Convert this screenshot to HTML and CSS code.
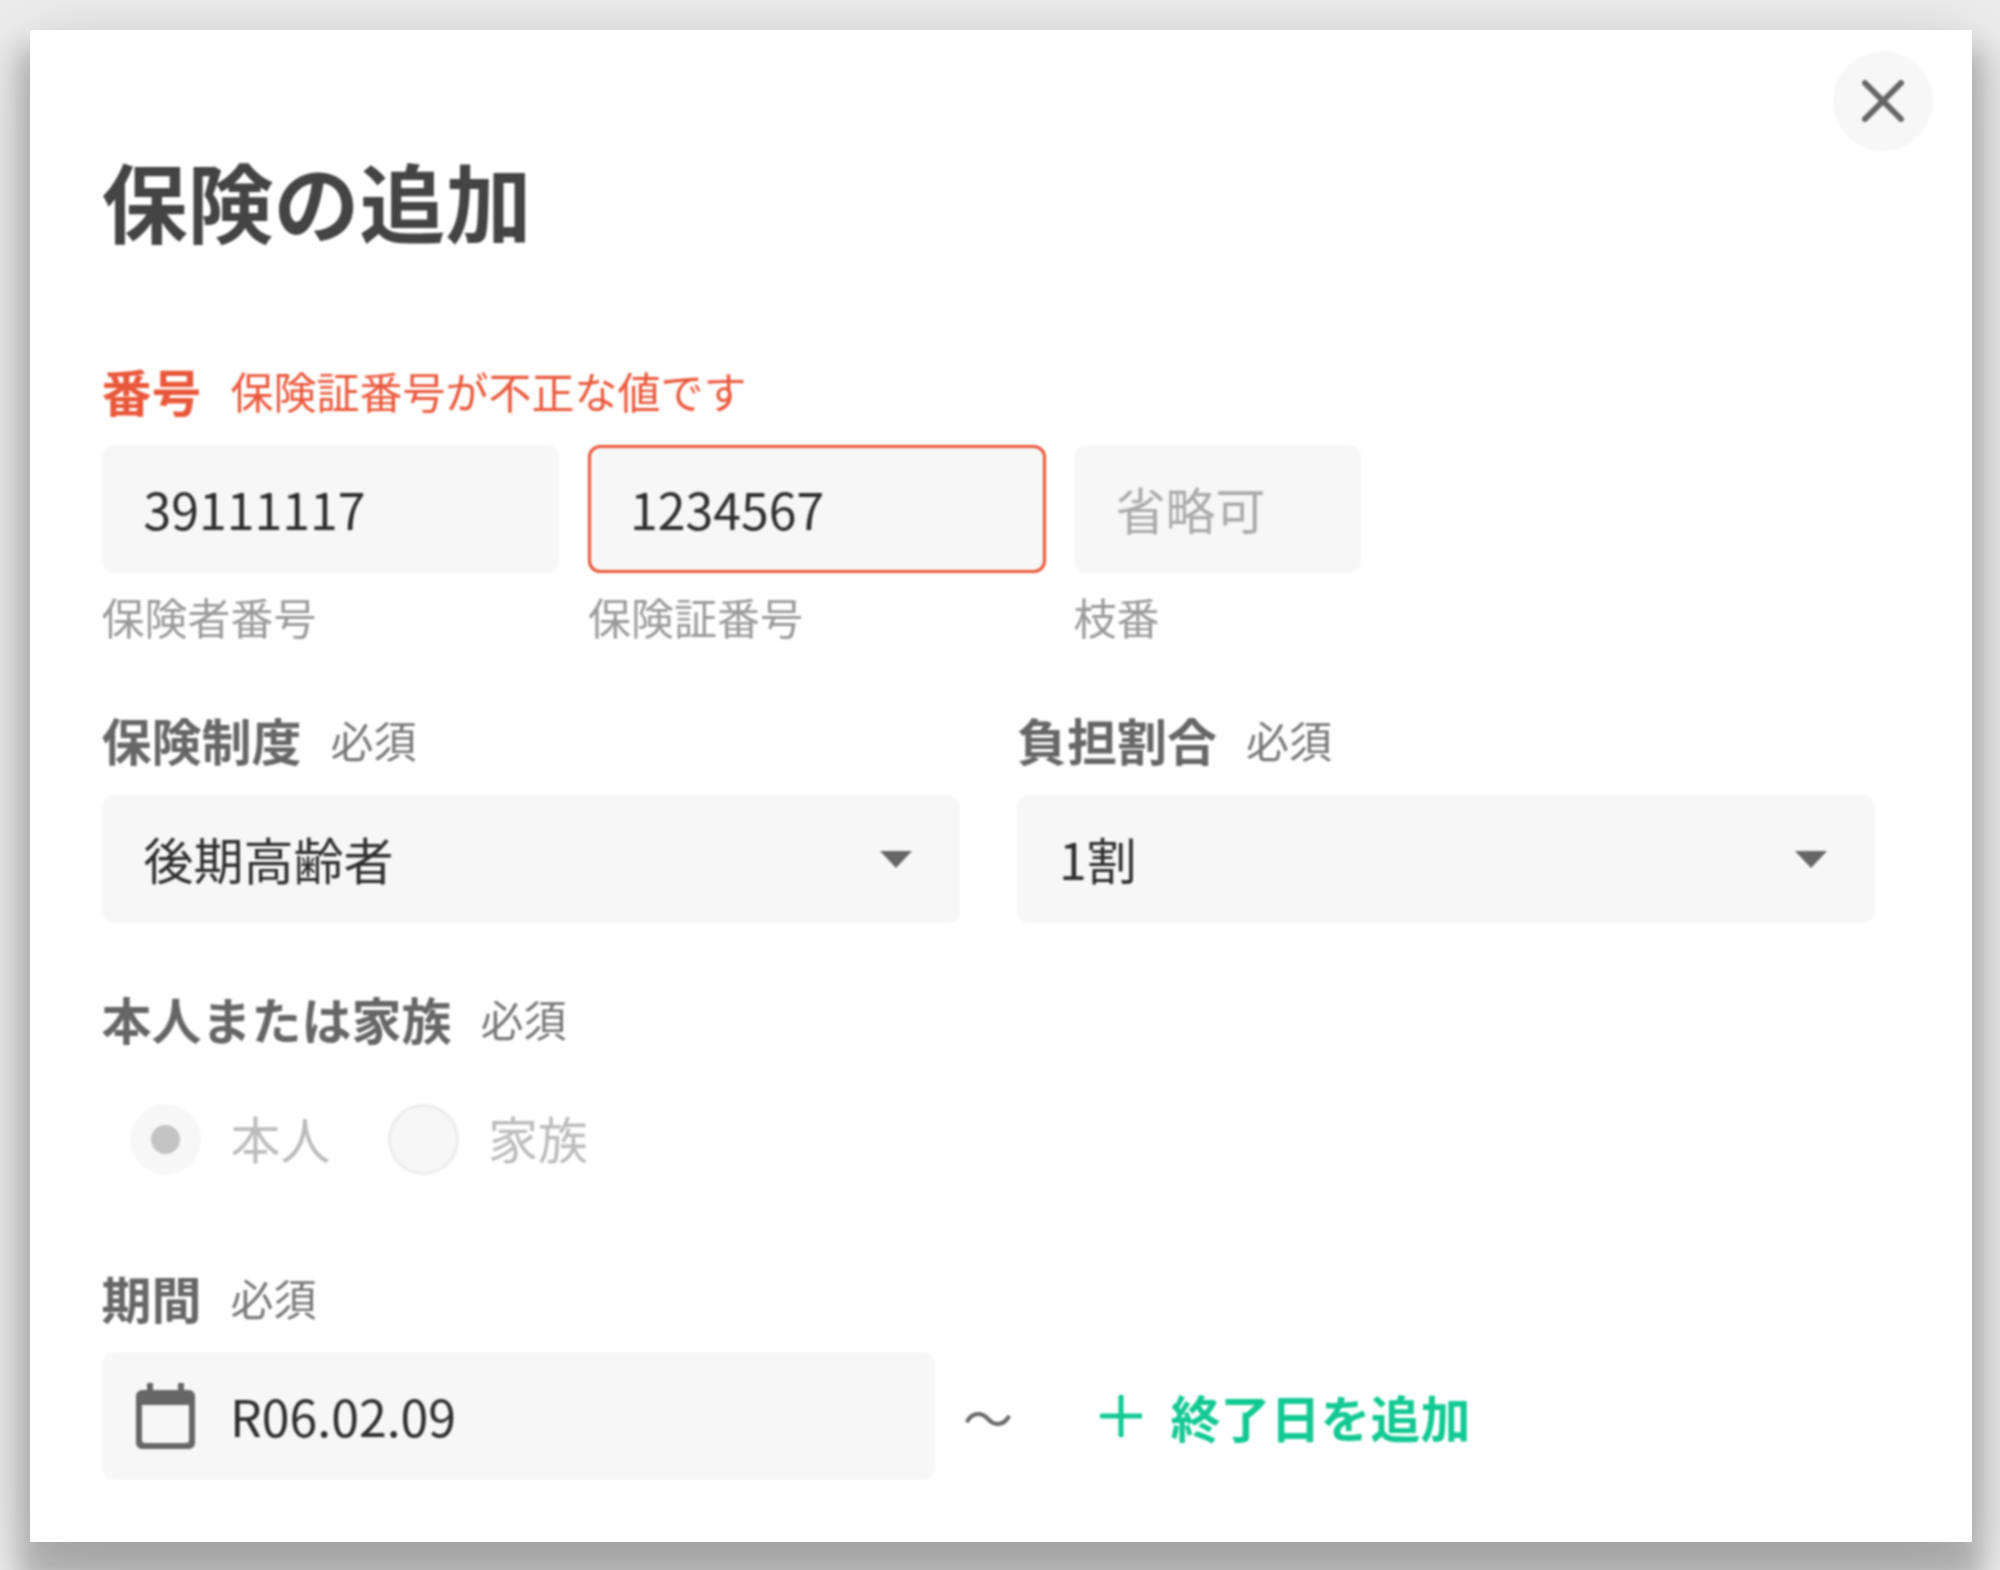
FILE: index.html
```html
<!DOCTYPE html>
<html lang="ja">
<head>
<meta charset="utf-8">
<title>保険の追加</title>
<link rel="stylesheet" href="styles.css">
</head>
<body>
<div class="modal">
  <button class="close" type="button" aria-label="閉じる">
    <svg width="42" height="42" viewBox="0 0 42 42"><path d="M3 3L39 39M39 3L3 39" stroke="#666" stroke-width="6" stroke-linecap="round" fill="none"/></svg>
  </button>
  <h1 class="title">保険の追加</h1>

  <div class="label-row label-row-first error">
    <span class="label">番号</span><span class="note">保険証番号が不正な値です</span>
  </div>
  <div class="number-row">
    <div class="number-col w-insurer">
      <div class="field">39111117</div>
      <div class="hint">保険者番号</div>
    </div>
    <div class="number-col w-card">
      <div class="field field-error">1234567</div>
      <div class="hint">保険証番号</div>
    </div>
    <div class="number-col w-branch">
      <div class="field placeholder">省略可</div>
      <div class="hint">枝番</div>
    </div>
  </div>

  <div class="select-row">
    <div class="select-col">
      <div class="label-row"><span class="label">保険制度</span><span class="note">必須</span></div>
      <div class="field select">後期高齢者<span class="arrow"></span></div>
    </div>
    <div class="select-col">
      <div class="label-row"><span class="label">負担割合</span><span class="note">必須</span></div>
      <div class="field select">1割<span class="arrow"></span></div>
    </div>
  </div>

  <div class="label-row label-row-person"><span class="label">本人または家族</span><span class="note">必須</span></div>
  <div class="radio-row">
    <span class="radio radio-on"><span class="dot"></span></span><span class="radio-text">本人</span>
    <span class="radio radio-off"></span><span class="radio-text">家族</span>
  </div>

  <div class="label-row label-row-period"><span class="label">期間</span><span class="note">必須</span></div>
  <div class="period-row">
    <div class="field date">
      <svg class="cal" width="59" height="66" viewBox="0 0 59 66"><path fill="#666" fill-rule="evenodd" d="M11 0h6v7h25V0h6v7h5a6 6 0 0 1 6 6v47a6 6 0 0 1-6 6H6a6 6 0 0 1-6-6V13a6 6 0 0 1 6-6h5zM6 22v35a3 3 0 0 0 3 3h41a3 3 0 0 0 3-3V22z"/></svg>
      <span>R06.02.09</span>
    </div>
    <span class="tilde">〜</span>
    <button class="add" type="button">
      <svg width="42" height="42" viewBox="0 0 42 42"><path d="M21 0V42M0 21H42" stroke="#12c991" stroke-width="5" fill="none"/></svg>
      <span>終了日を追加</span>
    </button>
  </div>
</div>
</body>
</html>
```
FILE: styles.css
```css
* { box-sizing: border-box; }
html, body { margin: 0; height: 100%; }
body {
  width: 2000px;
  height: 1570px;
  padding: 30px 28px 28px 30px;
  background: #eeeeee;
  overflow: hidden;
  font-family: "Noto Sans CJK JP", "Noto Sans", sans-serif;
}
.modal {
  position: relative;
  width: 1942px;
  height: 1512px;
  padding: 120px 96.5px 0 71.5px;
  background: #fff;
  box-shadow: 0 30px 25px 10px rgba(0,0,0,.22), 0 20px 80px 10px rgba(0,0,0,.15);
}
.modal > * { filter: blur(.8px); }
.close {
  position: absolute;
  top: 21px;
  right: 39px;
  width: 100px;
  height: 100px;
  padding: 0;
  border: 0;
  border-radius: 50%;
  background: #f7f7f7;
  display: flex;
  align-items: center;
  justify-content: center;
}
.title {
  margin: 0 0 108px;
  height: 100px;
  line-height: 100px;
  font-size: 86px;
  font-weight: 700;
  color: #444;
}
.label-row {
  display: flex;
  align-items: center;
  gap: 29px;
  height: 70px;
  margin-bottom: 18px;
  padding-bottom: 5px;
  color: #666;
}
.label-row-first { margin-bottom: 17px; }
.label { font-size: 50px; font-weight: 700; line-height: 65px; }
.note { font-size: 43px; line-height: 65px; color: #777; }
.error .label, .error .note { color: #e9573a; }
.number-row { display: flex; gap: 29.5px; margin-bottom: 59px; }
.number-row .w-branch { margin-left: -2px; }
.number-col { display: flex; flex-direction: column; }
.w-insurer { width: 457px; }
.w-card { width: 458px; }
.w-branch { width: 287px; }
.field {
  height: 128px;
  padding: 0 42px 3px;
  display: flex;
  align-items: center;
  background: #f7f7f7;
  border-radius: 12px;
  font-size: 50px;
  color: #2e2e2e;
}
.field-error { border: 3px solid #e9573a; padding: 0 39px 3px; }
.placeholder { color: #aaa; }
.hint { margin-top: 13px; padding-bottom: 2px; line-height: 60px; font-size: 43px; color: #999; }
.select-row { display: flex; gap: 57.5px; margin-bottom: 64px; }
.select-col { width: 858px; }
.select { justify-content: space-between; padding-right: 48px; }
.arrow {
  width: 0;
  height: 0;
  margin-top: 3px;
  border-left: 16px solid transparent;
  border-right: 16px solid transparent;
  border-top: 17px solid #666;
}
.label-row-person { margin-bottom: 47px; padding-bottom: 8px; }
.radio-row { display: flex; align-items: center; height: 71px; padding-left: 28.5px; margin-bottom: 91px; }
.radio {
  width: 71px;
  height: 71px;
  border-radius: 50%;
  background: #f7f7f7;
  display: flex;
  align-items: center;
  justify-content: center;
  margin-right: 29.5px;
}
.radio-off { border: 3px solid #ececec; }
.dot { width: 29px; height: 29px; border-radius: 50%; background: #c4c4c4; }
.radio-text { font-size: 50px; color: #bbb; margin-right: 57px; padding-bottom: 6px; }
.label-row-period { margin-bottom: 16px; padding-bottom: 8px; }
.period-row { display: flex; align-items: center; }
.date { width: 833.5px; padding-left: 34px; gap: 35.5px; }
.cal { margin-top: 3px; }
.tilde { margin-left: 28px; width: 50px; font-size: 50px; color: #666; }
.add {
  margin-left: 86.5px;
  display: flex;
  align-items: center;
  gap: 29px;
  padding: 0;
  border: 0;
  background: none;
  font-family: inherit;
  font-size: 50px;
  font-weight: 700;
  color: #12c991;
}
```
